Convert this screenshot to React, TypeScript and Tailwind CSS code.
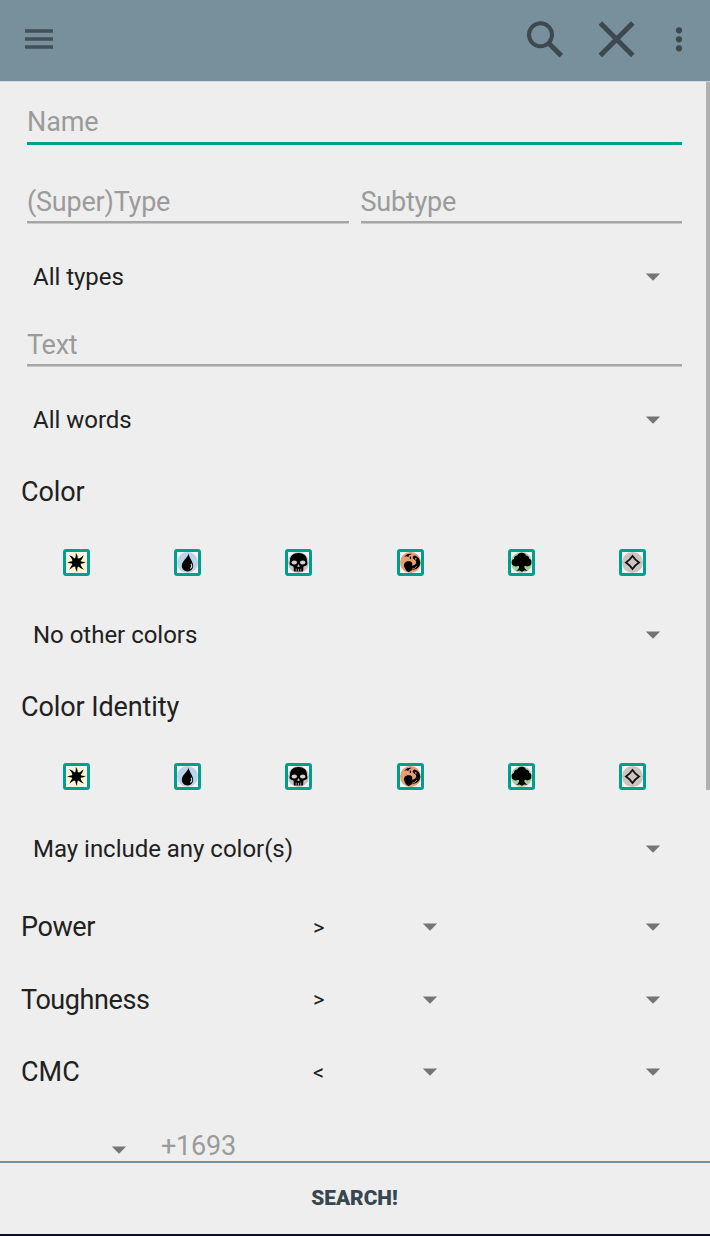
import React from "react";

function Arrow() {
  return (
    <svg className="block h-[8px] w-[16px] shrink-0" viewBox="0 0 16 8">
      <path d="M0.8 0.4H15.2L8 7.800Z" fill="#757575" />
    </svg>
  );
}

function Field({ label, className = "" }: { label: string; className?: string }) {
  return (
    <div className={"h-[40px] border-b-[2px] border-[#a6a6a6] text-[27px] leading-[38px] tracking-[-0.22px] text-[#9b9b9b] shadow-[0_1px_0_#c9c9c9] " + className}>
      {label}
    </div>
  );
}

function Spinner({ label }: { label: string }) {
  return (
    <div className="flex h-[72px] items-center justify-between pr-[45.500px] pl-[33px] text-2xl tracking-[-0.02px] text-[#212121]">
      <span>{label}</span>
      <Arrow />
    </div>
  );
}

function Heading({ children }: { children: React.ReactNode }) {
  return <div className="flex h-[71px] items-center pt-[2px] pl-[21px] text-[27px] tracking-[-0.1px] text-[#212121]">{children}</div>;
}

const symbols: { name: string; disc: string; art: React.ReactNode }[] = [
  {
    name: "white",
    disc: "#fbf6d0",
    art: (
      <g>
        <circle cx="10" cy="10" r="4.400" />
        <path
          d="M8.600 6.500Q9.600 4 9.400.8Q11.400 3.500 11.200 6.500zM11.500 6.600Q14 5.500 16.800 3Q16 6.500 13.400 8.500zM13.400 8.600Q16 9.600 19.300 9.400Q16.500 11.400 13.500 11.200zM13.400 11.500Q14.500 14 17 16.800Q13.500 16 11.500 13.400zM11.400 13.400Q10.400 16 10.600 19.200Q8.600 16.500 8.800 13.500zM8.500 13.400Q6 14.500 3.200 17Q4 13.500 6.600 11.500zM6.600 11.400Q4 10.400.7 10.600Q3.500 8.600 6.500 8.800zM6.600 8.500Q5.500 6 3 3.200Q6.500 4 8.500 6.600z"
        />
      </g>
    ),
  },
  {
    name: "blue",
    disc: "#bcd3ec",
    art: (
      <g>
        <path d="M11 1.500C10.800 5 4.600 8.500 4.600 13.200c0 3.200 2.400 5.400 5.300 5.400 3.200 0 5.500-2.200 5.500-5.400C15.400 9 11.600 5.800 11 1.500z" />
        <path d="M13.400 11.200c1 2 .7 3.500-.8 4.500" fill="none" stroke="#bcd3ec" strokeWidth="1.200" />
      </g>
    ),
  },
  {
    name: "black",
    disc: "#c9c1bd",
    art: (
      <g>
        <path d="M10 1C5 1 2 4 2 7.500c0 1.700-.8 2.500-.4 4.200.3 1.700 3.200 1.300 3.700 2.600.4 1.200-.2 3.300.5 4.300h8.400c.7-1 .1-3.100.5-4.300.5-1.300 3.400-.9 3.700-2.600.4-1.700-.4-2.500-.4-4.200C18 4 15 1 10 1z" />
        <ellipse cx="6" cy="10" rx="2.600" ry="1.800" fill="#d5cecb" />
        <ellipse cx="14" cy="10" rx="2.600" ry="1.800" fill="#d5cecb" />
        <path d="M10 12l-.8 1.800h1.600zM7.800 15.800v2.800M10 16v2.600M12.200 15.800v2.800" fill="#d5cecb" stroke="#c9c1bd" strokeWidth=".7" />
      </g>
    ),
  },
  {
    name: "red",
    disc: "#e79c76",
    art: (
      <g>
        <path d="M4.300 14.800C2.800 11.500 5 8.900 8.200 8.900c3 0 4.400 2 3 3.900 2.500.4 4.600-1.200 4.200-3.700-.3-1.800-2.900-1.800-3.200-3.500-.2-1.400.8-2.400 2.400-2.100 2.500.9 4.600 3.300 4.700 6.500.1 4.700-3.800 6.500-7.400 7.200-1.800.4-2.600 1.400-3.700 2.200-1.600-.9-3.200-2.500-3.900-4.600z" />
        <path d="M3.800 4.800C5.500 2.500 8.500 1.300 11.200 1.800 9.200 2.300 8.300 3.200 7.900 4.800 6.600 3.900 5.200 4 3.800 4.800zM9.300 4.200a1.300 1.300 0 1 1 .1 2.600z" />
        <circle cx="15" cy="6.500" r=".8" fill="#e79c76" />
        <path d="M16 13.500Q14 16.300 11.300 16.500" fill="none" stroke="#e79c76" strokeWidth=".8" />
      </g>
    ),
  },
  {
    name: "green",
    disc: "#a6cfa0",
    art: (
      <path d="M10.200.8c2-.1 3.600.9 4 2.500 2 0 3.100 1.300 3 2.800 1.700.7 2.600 2.100 2.100 3.700.3 1.700-.5 3.200-2.100 3.400-.8.900-2.400.7-3.200-.1l-1.300.4c-.1 2 .9 3 3.200 4.400l-3.200-.3-2.200 1.200-2.500-1.100-3.200.4c2.200-1.400 3-2.600 2.900-4.500l-1.200-.5c-1 .9-2.400.9-3.300.2-1.700 0-2.800-1.500-2.400-3.200C.200 8.500 1.300 7 2.800 6.600 2.700 4.700 4 3.400 6 3.400 6.700 1.800 8.300.9 10.200.8z" />
    ),
  },
  {
    name: "colorless",
    disc: "#cbc4c0",
    art: <path d="M10 3.800Q12.500 7.500 16.200 10 12.500 12.500 10 16.200 7.500 12.500 3.800 10 7.500 7.500 10 3.800z" fill="none" stroke="#111" strokeWidth="1.700" />,
  },
];

function ColorRow() {
  return (
    <div className="grid h-[71.500px] grid-cols-6 items-center pr-[18px] pb-[1px] pl-[21px]">
      {symbols.map((s) => (
        <div key={s.name} className="flex justify-center">
          <div className="h-[27px] w-[27px] rounded-[3px] border-[3px] border-[#009f8d] bg-[#f5f5f5]">
            <svg className="block h-[21px] w-[21px]" viewBox="0 0 20 20">
              <circle cx="10" cy="10" r="10" fill={s.disc} />
              {s.art}
            </svg>
          </div>
        </div>
      ))}
    </div>
  );
}

function StatRow({ label, sign }: { label: string; sign: string }) {
  return (
    <div className="flex h-[72.500px] items-center pr-[45.500px] pl-[21px] text-[27px] text-[#212121]">
      <span className={label === "CMC" ? "w-[291px]" : "w-[291px] tracking-[-0.42px]"}>{label}</span>
      <span className="w-[110px] pl-px text-[22px]">{sign}</span>
      <Arrow />
      <span className="flex-1" />
      <Arrow />
    </div>
  );
}

export default function App() {
  return (
    <div className="flex h-[1236px] w-[710px] flex-col overflow-hidden bg-[#eeeeee] font-['Roboto',sans-serif]">
      <header className="flex h-[82px] shrink-0 items-center border-b border-[#cfd8dc] bg-[#78909c] pb-[3px]">
        <svg className="ml-[24px] h-[22px] w-[30px]" viewBox="0 0 30 22">
          <path d="M1 3H29M1 11H29M1 19H29" stroke="#435056" strokeWidth="3.400" />
        </svg>
        <span className="flex-1" />
        <svg className="mr-[34px] h-[38px] w-[38px]" viewBox="0 0 38 38" fill="none" stroke="#3d494f">
          <circle cx="14.500" cy="14.800" r="11.500" strokeWidth="4" />
          <path d="M23.500 24L35.300 35.800" strokeWidth="5" />
        </svg>
        <svg className="mr-[37px] h-[38px] w-[38px]" viewBox="0 0 38 38">
          <path d="M2.300 3L34.800 35.500M34.800 3L2.300 35.500" stroke="#3d494f" strokeWidth="5" />
        </svg>
        <svg className="mr-[25px] h-[26px] w-[12px]" viewBox="0 0 12 26" fill="#3d494f">
          <circle cx="6" cy="4.300" r="3.100" />
          <circle cx="6" cy="13.300" r="3.100" />
          <circle cx="6" cy="22.300" r="3.100" />
        </svg>
      </header>

      <div className="flex h-[1079px] shrink-0 items-start overflow-hidden">
        <main className="w-[706px] shrink-0">
          <div className="mt-[21px] mr-[24px] ml-[27px] h-[42px] border-b-[3px] border-[#009f8d] text-[27px] leading-[38px] tracking-[-0.1px] text-[#9b9b9b]">
            Name
          </div>
          <div className="mt-[38px] mr-[24px] ml-[27px] flex gap-[12px]">
            <Field label="(Super)Type" className="flex-1" />
            <Field label="Subtype" className="flex-1" />
          </div>
          <div className="mt-[18px]">
            <Spinner label="All types" />
          </div>
          <Field label="Text" className="mt-[13px] mr-[24px] ml-[27px]" />
          <div className="mt-[18px]">
            <Spinner label="All words" />
          </div>
          <Heading>Color</Heading>
          <ColorRow />
          <Spinner label="No other colors" />
          <Heading>Color Identity</Heading>
          <ColorRow />
          <Spinner label="May include any color(s)" />
          <div className="mt-[6px]">
            <StatRow label="Power" sign=">" />
            <StatRow label="Toughness" sign=">" />
            <StatRow label="CMC" sign="<" />
          </div>
          <div className="flex h-[76px] items-center pl-[111px] text-[27px] leading-none tracking-[-0.2px] text-[#9b9b9b]">
            <div className="pt-[6px]">
              <Arrow />
            </div>
            <span className="pl-[34px]">+1693</span>
          </div>
        </main>
        <div className="h-[708px] flex-1 bg-[#b0b0b0]" />
      </div>

      <footer className="flex flex-1 items-center justify-center border-t-[2px] border-b-[2px] border-t-[#78909c] border-b-[#090d2e] pt-[1px] pr-px text-[20.800px] font-black text-[#37474f]">
        SEARCH!
      </footer>
    </div>
  );
}
